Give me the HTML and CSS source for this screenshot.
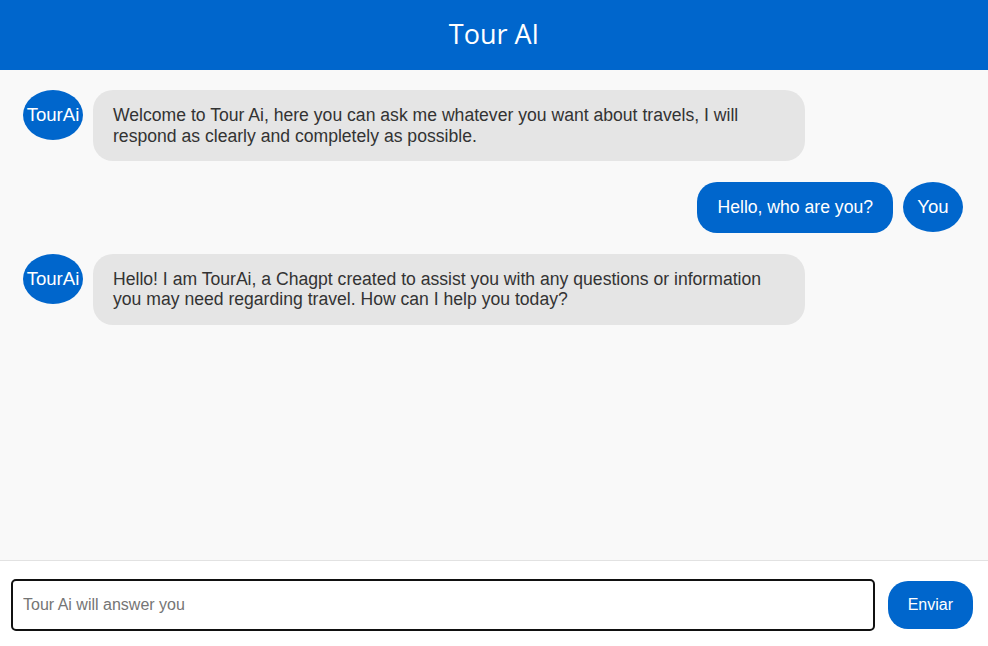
FILE: index.html
```html
<!DOCTYPE html>
<html lang="en">
<head>
<meta charset="utf-8">
<title>Tour AI</title>
<link rel="stylesheet" href="styles.css">
</head>
<body>
<div class="app">
  <header class="header"><h1 class="title">Tour AI</h1></header>
  <main class="chat">
    <div class="row bot">
      <div class="avatar">TourAi</div>
      <div class="bubble">Welcome to Tour Ai, here you can ask me whatever you want about travels, I will respond as clearly and completely as possible.</div>
    </div>
    <div class="row user">
      <div class="bubble">Hello, who are you?</div>
      <div class="avatar">You</div>
    </div>
    <div class="row bot">
      <div class="avatar">TourAi</div>
      <div class="bubble">Hello! I am TourAi, a Chagpt created to assist you with any questions or information you may need regarding travel. How can I help you today?</div>
    </div>
  </main>
  <footer class="composer">
    <input class="input" type="text" placeholder="Tour Ai will answer you" autofocus>
    <button class="send">Enviar</button>
  </footer>
</div>
</body>
</html>
```
FILE: styles.css
```css
* { box-sizing: border-box; }
html, body { margin: 0; height: 100%; }
body {
  font-family: "Liberation Sans", Arial, sans-serif;
  font-size: 16px;
  color: #333;
  background: #fff;
}
.app {
  display: flex;
  flex-direction: column;
  height: 100vh;
}
.header {
  height: 70px;
  background: #0066cc;
  display: flex;
  align-items: center;
  justify-content: center;
  flex-shrink: 0;
}
.title {
  margin: 0;
  font-family: "Open Sans", "Noto Sans", sans-serif;
  font-weight: 400;
  font-size: 27px;
  color: #fff;
  padding-bottom: 4px;
}
.chat {
  flex: 1;
  background: #f9f9f9;
  padding: 20px 25px 20px 23px;
  display: flex;
  flex-direction: column;
  gap: 21px;
  border-bottom: 1px solid #e2e2e2;
  overflow: hidden;
}
.row {
  display: flex;
  align-items: flex-start;
  gap: 10px;
}
.row.user {
  justify-content: flex-end;
  align-items: center;
}
.avatar {
  width: 60px;
  height: 50px;
  border-radius: 50%;
  background: #0066cc;
  color: #fff;
  font-size: 18.6px;
  display: flex;
  align-items: center;
  justify-content: center;
  flex-shrink: 0;
}
.bubble {
  background: #e5e5e5;
  border-radius: 20px;
  padding: 15px 20px;
  font-size: 17.6px;
  line-height: 20.5px;
  width: 712px;
}
.user .bubble {
  background: #0066cc;
  color: #fff;
  width: auto;
}
.composer {
  display: flex;
  align-items: center;
  gap: 13px;
  padding: 18px 15px 15px 11px;
  background: #fff;
  flex-shrink: 0;
}
.input {
  flex: 1;
  height: 52px;
  border: 2px solid #111;
  border-radius: 5px;
  padding: 0 10px;
  font-family: "Liberation Sans", Arial, sans-serif;
  font-size: 16px;
  color: #333;
  outline: none;
}
.input::placeholder { color: #757575; }
.send {
  background: #0066cc;
  color: #fff;
  border: none;
  border-radius: 20px;
  padding: 15px 20px;
  font-family: "Liberation Sans", Arial, sans-serif;
  font-size: 16px;
  line-height: 18px;
}
```
